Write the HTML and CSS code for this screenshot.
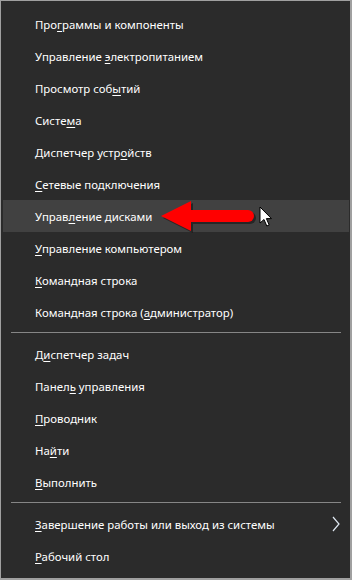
FILE: index.html
```html
<!DOCTYPE html>
<html lang="ru">
<head>
<meta charset="utf-8">
<link rel="stylesheet" href="styles.css">
</head>
<body>
<div class="menu">
  <div class="item"><span class="label">Про<u>г</u>раммы и компоненты</span></div>
  <div class="item"><span class="label">Управление <u>э</u>лектропитанием</span></div>
  <div class="item"><span class="label">Просмотр соб<u>ы</u>тий</span></div>
  <div class="item"><span class="label">Систе<u>м</u>а</span></div>
  <div class="item"><span class="label">Диспетчер устр<u>о</u>йств</span></div>
  <div class="item"><span class="label"><u>С</u>етевые подключения</span></div>
  <div class="item hover"><span class="label">Управ<u>л</u>ение дисками</span>
    <svg class="arrow" width="100" height="38" viewBox="0 0 100 38">
      <g transform="translate(2,2)" fill="#151515" opacity="0.6">
        <polygon points="1,16 31,1 31,10 88,10 88,22 31,22 31,31"/>
        <circle cx="88" cy="16" r="6"/>
      </g>
      <g fill="#ff0000">
        <polygon points="1,16 31,1 31,10 88,10 88,22 31,22 31,31"/>
        <circle cx="88" cy="16" r="6"/>
      </g>
    </svg>
    <svg class="cursor" width="14" height="22" viewBox="0 0 14 22">
      <path d="M1 1 L1 17 L5 13.5 L7.8 20 L10.2 19 L7.4 12.6 L12.5 12.6 Z" fill="#fff" stroke="#000" stroke-width="1" stroke-linejoin="miter"/>
    </svg>
  </div>
  <div class="item"><span class="label"><u>У</u>правление компьютером</span></div>
  <div class="item"><span class="label"><u>К</u>омандная строка</span></div>
  <div class="item"><span class="label">Командная строка (<u>а</u>дминистратор)</span></div>
  <div class="sep"></div>
  <div class="item"><span class="label">Д<u>и</u>спетчер задач</span></div>
  <div class="item"><span class="label">Панел<u>ь</u> управления</span></div>
  <div class="item"><span class="label"><u>П</u>роводник</span></div>
  <div class="item"><span class="label">На<u>й</u>ти</span></div>
  <div class="item"><span class="label"><u>В</u>ыполнить</span></div>
  <div class="sep"></div>
  <div class="item sub"><span class="label"><u>З</u>авершение работы или выход из системы</span>
    <svg class="chev" width="10" height="16" viewBox="0 0 10 16"><polyline points="2,1 8,8 2,15" fill="none" stroke="#dfe8f2" stroke-width="1.2"/></svg>
  </div>
  <div class="item"><span class="label"><u>Р</u>абочий стол</span></div>
</div>
</body>
</html>
```

FILE: styles.css
```css
html, body {
  margin: 0;
  padding: 0;
  background: #2b2b2b;
}
.menu {
  box-sizing: border-box;
  width: 352px;
  height: 580px;
  background: #2b2b2b;
  border-style: solid;
  border-color: #a0a0a0;
  border-width: 1px 2px 2px 1px;
  padding-top: 7px;
  font-family: "Noto Sans", "Open Sans", sans-serif;
  font-size: 11.4px;
  color: #ffffff;
}
.item {
  position: relative;
  height: 32px;
  display: flex;
  align-items: center;
  padding-left: 32px;
  margin: 0 1px 0 2px;
  white-space: nowrap;
}
.label u {
  text-decoration: underline;
  text-underline-offset: 2px;
  text-decoration-thickness: 1px;
}
.hover {
  background: #414141;
}
.sep {
  height: 1px;
  background: #868686;
  margin: 4px 9px 5px 10px;
}
.sub {
  justify-content: space-between;
  padding-right: 8px;
}
.arrow {
  position: absolute;
  left: 157px;
  top: 0;
}
.cursor {
  position: absolute;
  left: 256px;
  top: 6px;
}
```
